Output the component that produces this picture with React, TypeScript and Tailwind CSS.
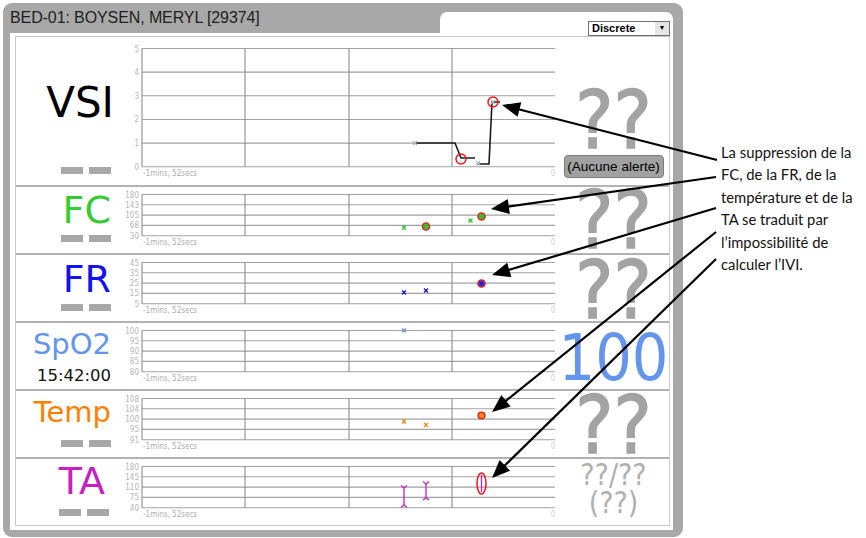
import React from "react";

const num = "font-['DejaVu_Sans_Condensed','DejaVu_Sans',sans-serif]";
const dv = "font-['DejaVu_Sans',sans-serif]";
const axisFont = "DejaVu Sans Condensed, DejaVu Sans, sans-serif";

// plot area x positions inside the 432px chart svg
const PLOT_L = 16;
const PLOT_R = 429;
const VLINES = [16, 119, 223, 326];

function Chart({
  h,
  ticks,
  top,
  step,
  children,
}: {
  h: number;
  ticks: string[];
  top: number;
  step: number;
  children?: React.ReactNode;
}) {
  const ys = ticks.map((_, i) => top + i * step);
  const bottom = ys[ys.length - 1];
  return (
    <svg width={432} height={h} className="block shrink-0">
      {ys.map((y, i) => (
        <line key={i} x1={PLOT_L} x2={PLOT_R} y1={y} y2={y} stroke="#a2a2a2" strokeWidth={1.1} />
      ))}
      {VLINES.map((x) => (
        <line key={x} x1={x} x2={x} y1={ys[0]} y2={bottom} stroke="#8c8c8c" strokeWidth={1.1} />
      ))}
      {ticks.map((t, i) => (
        <text key={i} x={13} y={ys[i] + 3} textAnchor="end" fontSize={8} fill="#b4b4b4" fontFamily={axisFont}>
          {t}
        </text>
      ))}
      <text x={17} y={bottom + 9} fontSize={8} fill="#acacac" fontFamily={axisFont}>
        -1mins, 52secs
      </text>
      <text x={427} y={bottom + 9} textAnchor="middle" fontSize={8} fill="#cfcfcf" fontFamily={axisFont}>
        0
      </text>
      {children}
    </svg>
  );
}

function Cross({ x, y, c, s = 2 }: { x: number; y: number; c: string; s?: number }) {
  return (
    <g stroke={c} strokeWidth={1.3}>
      <rect x={x - 1} y={y - 1} width={2} height={2} fill={c} stroke="none" />
      <line x1={x - s} y1={y - s} x2={x + s} y2={y + s} />
      <line x1={x - s} y1={y + s} x2={x + s} y2={y - s} />
    </g>
  );
}

function Ring({ x, y, fill, r = 3.6 }: { x: number; y: number; fill: string; r?: number }) {
  return <circle cx={x} cy={y} r={r} fill={fill} stroke="#f01818" strokeWidth={1.4} />;
}

function IBar({ x, y1, y2 }: { x: number; y1: number; y2: number }) {
  return (
    <g stroke="#c51fc5" strokeWidth={1.3} fill="none">
      <line x1={x} y1={y1 + 2} x2={x} y2={y2 - 2} />
      <polyline points={`${x - 3},${y1} ${x},${y1 + 2.5} ${x + 3},${y1}`} />
      <polyline points={`${x - 3},${y2} ${x},${y2 - 2.5} ${x + 3},${y2}`} />
    </g>
  );
}

function Arrow({ x1, y1, x2, y2 }: { x1: number; y1: number; x2: number; y2: number }) {
  const dx = x2 - x1;
  const dy = y2 - y1;
  const len = Math.hypot(dx, dy);
  const ux = dx / len;
  const uy = dy / len;
  const head = 18;
  const half = 7.5;
  const bx = x2 - ux * head;
  const by = y2 - uy * head;
  const px = -uy * half;
  const py = ux * half;
  return (
    <g>
      <line x1={x1} y1={y1} x2={bx + ux * 2} y2={by + uy * 2} stroke="#000" strokeWidth={2.2} />
      <polygon points={`${x2},${y2} ${bx + px},${by + py} ${bx - px},${by - py}`} fill="#000" />
    </g>
  );
}

function Dashes() {
  return (
    <div className="flex gap-[6px]">
      <div className="w-[22px] h-[7px] bg-[#a8a8a8]" />
      <div className="w-[22px] h-[7px] bg-[#a8a8a8]" />
    </div>
  );
}

const bigQ = `${num} text-[80px] leading-[64px] text-[#a3a3a3] [-webkit-text-stroke:1.5px_#a3a3a3]`;

function Unknown({ pt }: { pt: string }) {
  return (
    <div className={`w-[111px] shrink-0 flex justify-center ${pt}`}>
      <span className={bigQ}>??</span>
    </div>
  );
}

export default function App() {
  return (
    <div className="relative w-[866px] h-[538px] bg-white overflow-hidden flex items-start">
      {/* monitor window */}
      <div className="ml-[3px] mt-[3px] w-[680px] h-[534px] shrink-0 rounded-[9px] bg-[#a8a8a8] flex flex-col">
        <div className="h-[30px] flex items-start justify-between">
          <div className="pl-[7px] pt-[7px] font-['Liberation_Sans',Arial,sans-serif] text-[16px] leading-none text-[#1e1e1e] tracking-[-0.1px]">
            BED-01: BOYSEN, MERYL [29374]
          </div>
          <div className="mt-[9px] mr-[10px] w-[233px] h-[21px] bg-white rounded-t-[7px] flex justify-end pr-[3px]">
            <div className="relative z-10 mt-[9px] w-[82px] h-[15px] bg-white border border-[#6e6e6e] flex items-stretch">
              <span className="flex-1 pl-[3px] font-['Liberation_Sans',Arial,sans-serif] font-bold text-[11px] leading-[13px] text-black">
                Discrete
              </span>
              <span className="w-[14px] bg-[#e6e6e6] flex items-center justify-center text-[7px] text-black">▼</span>
            </div>
          </div>
        </div>

        <div className="mx-[7px] mr-[10px] h-[497px] bg-white pt-[3px] px-[5px] pr-[3px]">
          <div className="border border-[#c9c9c9] flex flex-col">
            {/* VSI */}
            <div className="h-[150px] border-b-2 border-[#b2b2b2] flex">
              <div className="w-[110px] shrink-0 flex flex-col items-end pr-[15px] pt-[45px]">
                <span className={`${dv} text-[42px] leading-none text-black mr-[-3px]`}>VSI</span>
                <div className="mt-[43px]">
                  <Dashes />
                </div>
              </div>
              <Chart h={148} ticks={["5", "4", "3", "2", "1", "0"]} top={11.5} step={23.65}>
                <polyline
                  points="289,106 329,106 335,121 349,121"
                  fill="none"
                  stroke="#1a1a1a"
                  strokeWidth={1.6}
                />
                <polyline
                  points="352,127 363,127 366,65 374,65"
                  fill="none"
                  stroke="#1a1a1a"
                  strokeWidth={1.6}
                />
                <Cross x={289} y={106} c="#b5b5b5" />
                <Cross x={352} y={126} c="#b5b5b5" />
                <Cross x={367} y={65} c="#b5b5b5" />
                <circle cx={335} cy={122} r={5} fill="none" stroke="#f01818" strokeWidth={1.5} />
                <circle cx={367} cy={65} r={5} fill="none" stroke="#f01818" strokeWidth={1.5} />
              </Chart>
              <div className="w-[111px] shrink-0 flex flex-col items-center pt-[52px]">
                <div className={`h-[64px] ${bigQ}`}>??</div>
                <div className="mt-[2px] w-[100px] h-[23px] rounded-[4px] bg-[#a1a1a1] border border-[#7b7b7b] flex items-center justify-center font-['Liberation_Sans',Arial,sans-serif] text-[13.5px] leading-none text-black">
                  (Aucune alerte)
                </div>
              </div>
            </div>

            {/* FC */}
            <div className="h-[68px] border-b-2 border-[#b2b2b2] flex">
              <div className="w-[110px] shrink-0 flex flex-col items-end pr-[15px] pt-[4px]">
                <span className={`${dv} text-[38px] leading-none text-[#33cc33]`}>FC</span>
                <div className="mt-[6px]">
                  <Dashes />
                </div>
              </div>
              <Chart h={66} ticks={["180", "143", "105", "68", "30"]} top={7.5} step={10.3}>
                <Cross x={278} y={40.5} c="#33cc33" />
                <Ring x={300} y={39.5} fill="#33bb33" />
                <Cross x={344.5} y={33.5} c="#33cc33" />
                <Ring x={355.5} y={29.5} fill="#33bb33" />
              </Chart>
              <Unknown pt="pt-[2px]" />
            </div>

            {/* FR */}
            <div className="h-[68px] border-b-2 border-[#b2b2b2] flex">
              <div className="w-[110px] shrink-0 flex flex-col items-end pr-[15px] pt-[5px]">
                <span className={`${dv} text-[38px] leading-none text-[#1212f0]`}>FR</span>
                <div className="mt-[6px]">
                  <Dashes />
                </div>
              </div>
              <Chart h={66} ticks={["45", "35", "25", "15", "5"]} top={7.5} step={10.3}>
                <Cross x={278} y={37.5} c="#1a1ae6" />
                <Cross x={300} y={35.5} c="#1a1ae6" />
                <Ring x={355.5} y={28.5} fill="#3a3ae0" />
                <Cross x={355.5} y={28.5} c="#1a1ae6" s={1.6} />
              </Chart>
              <Unknown pt="pt-[4px]" />
            </div>

            {/* SpO2 */}
            <div className="h-[68px] border-b-2 border-[#b2b2b2] flex">
              <div className="w-[110px] shrink-0 flex flex-col items-end pr-[15px] pt-[7px]">
                <span className={`${dv} text-[29px] leading-none text-[#6495ed]`}>SpO2</span>
                <span className={`${dv} mt-[9px] text-[16.5px] leading-none text-[#111]`}>15:42:00</span>
              </div>
              <Chart h={66} ticks={["100", "95", "90", "85", "80"]} top={7.5} step={10.3}>
                <Cross x={278} y={7.5} c="#6f95e0" />
              </Chart>
              <div className="w-[111px] shrink-0 flex justify-center pt-[9px]">
                <span className={`${num} text-[64px] leading-[52px] text-[#6495ed]`}>100</span>
              </div>
            </div>

            {/* Temp */}
            <div className="h-[68px] border-b-2 border-[#b2b2b2] flex">
              <div className="w-[110px] shrink-0 flex flex-col items-end pr-[15px] pt-[7px]">
                <span className={`${dv} text-[29px] leading-none text-[#ff8000]`}>Temp</span>
                <div className="mt-[13px]">
                  <Dashes />
                </div>
              </div>
              <Chart h={66} ticks={["108", "104", "100", "95", "91"]} top={7.5} step={10.3}>
                <Cross x={278} y={30.5} c="#f08a20" />
                <Cross x={300} y={34} c="#f08a20" />
                <Ring x={355.5} y={24.5} fill="#ff8a1a" r={3.4} />
              </Chart>
              <Unknown pt="pt-[3px]" />
            </div>

            {/* TA */}
            <div className="h-[66px] flex">
              <div className="w-[110px] shrink-0 flex flex-col items-end pr-[15px] pt-[3px]">
                <span className={`${dv} text-[38px] leading-none text-[#c51fc5] mr-[6px]`}>TA</span>
                <div className="mt-[9px] mr-[2px]">
                  <Dashes />
                </div>
              </div>
              <Chart h={66} ticks={["180", "145", "110", "75", "40"]} top={7.5} step={10.3}>
                <IBar x={278} y1={26.5} y2={48.5} />
                <IBar x={300} y1={22.5} y2={41} />
                <ellipse cx={355.5} cy={24.5} rx={4.5} ry={10.5} fill="none" stroke="#f01818" strokeWidth={1.5} />
                <line x1={355.5} y1={16} x2={355.5} y2={33} stroke="#c51fc5" strokeWidth={1.3} />
              </Chart>
              <div className={`w-[111px] shrink-0 flex flex-col items-center pt-[2px] ${num} text-[30px] text-[#b0b0b0]`}>
                <div className="h-[27px] leading-[27px]">??/??</div>
                <div className="h-[30px] leading-[30px]">(??)</div>
              </div>
            </div>
          </div>
        </div>
      </div>

      {/* annotation */}
      <div className="ml-[38px] mt-[141px] font-['Lato','Open_Sans',sans-serif] text-[14.8px] leading-[22.4px] text-[#111]">
        <div>La suppression de la</div>
        <div>FC, de la FR, de la</div>
        <div>température et de la</div>
        <div>TA se traduit par</div>
        <div>l’impossibilité de</div>
        <div>calculer l’IVI.</div>
      </div>

      {/* callout arrows */}
      <svg width={866} height={538} className="absolute left-0 top-0 pointer-events-none">
        <Arrow x1={717} y1={160} x2={502} y2={105} />
        <Arrow x1={716} y1={177} x2={491} y2={209} />
        <Arrow x1={716} y1={208} x2={492} y2={275} />
        <Arrow x1={716} y1={232} x2={492} y2={412} />
        <Arrow x1={716} y1={259} x2={492} y2={478} />
      </svg>
    </div>
  );
}
